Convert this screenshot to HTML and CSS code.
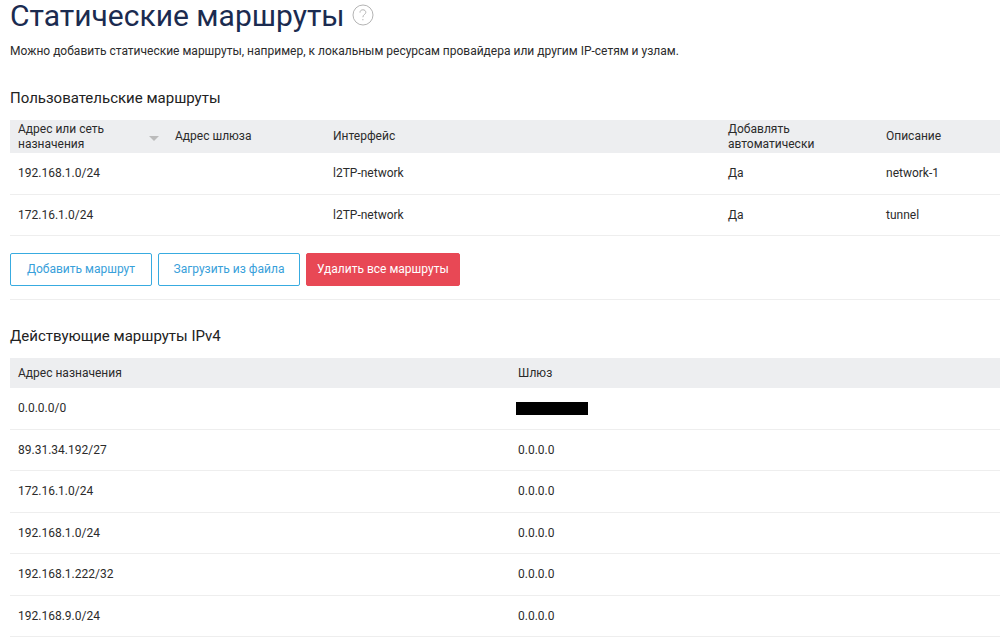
FILE: index.html
```html
<!DOCTYPE html>
<html lang="ru">
<head>
<meta charset="utf-8">
<meta name="viewport" content="width=device-width, initial-scale=1">
<title>Статические маршруты</title>
<link rel="stylesheet" href="styles.css">
</head>
<body>
<main class="page">
  <header class="page-header">
    <h1 class="page-title">Статические маршруты</h1>
    <button class="help" type="button" aria-label="Справка">
      <svg class="help-icon" viewBox="0 0 22 22" aria-hidden="true">
        <circle cx="11" cy="11" r="10"/>
        <path d="M8 8.6C8 6.7 9.2 5.8 10.9 5.8S13.8 6.8 13.8 8.4C13.8 10.4 10.9 10.6 10.9 13.2M10.9 15v1.3"/>
      </svg>
    </button>
  </header>
  <p class="lead">Можно добавить статические маршруты, например, к локальным ресурсам провайдера или другим IP-сетям и узлам.</p>

  <section class="user-routes">
    <h2 class="section-title">Пользовательские маршруты</h2>
    <table class="table">
      <colgroup><col class="col-address"><col class="col-field"><col><col class="col-field"><col class="col-note"></colgroup>
      <thead>
        <tr class="head-tall">
          <th scope="col" aria-sort="descending"><div class="sortable"><span>Адрес или сеть назначения</span><span class="sort-arrow"></span></div></th>
          <th scope="col">Адрес шлюза</th>
          <th scope="col">Интерфейс</th>
          <th scope="col">Добавлять автоматически</th>
          <th scope="col">Описание</th>
        </tr>
      </thead>
      <tbody>
        <tr><td>192.168.1.0/24</td><td></td><td>l2TP-network</td><td>Да</td><td>network-1</td></tr>
        <tr><td>172.16.1.0/24</td><td></td><td>l2TP-network</td><td>Да</td><td>tunnel</td></tr>
      </tbody>
    </table>
    <div class="actions">
      <button class="btn" type="button">Добавить маршрут</button>
      <button class="btn" type="button">Загрузить из файла</button>
      <button class="btn btn-danger" type="button">Удалить все маршруты</button>
    </div>
  </section>

  <section class="active-routes">
    <h2 class="section-title">Действующие маршруты IPv4</h2>
    <table class="table">
      <colgroup><col class="col-half"><col></colgroup>
      <thead>
        <tr class="head"><th scope="col">Адрес назначения</th><th scope="col">Шлюз</th></tr>
      </thead>
      <tbody>
        <tr><td>0.0.0.0/0</td><td><span class="redacted"></span></td></tr>
        <tr><td>89.31.34.192/27</td><td>0.0.0.0</td></tr>
        <tr><td>172.16.1.0/24</td><td>0.0.0.0</td></tr>
        <tr><td>192.168.1.0/24</td><td>0.0.0.0</td></tr>
        <tr><td>192.168.1.222/32</td><td>0.0.0.0</td></tr>
        <tr><td>192.168.9.0/24</td><td>0.0.0.0</td></tr>
      </tbody>
    </table>
  </section>
</main>
</body>
</html>
```

FILE: styles.css
```css
* { box-sizing: border-box; }

body {
  margin: 0;
  background: #fff;
  color: #2b2b2b;
  font-family: Roboto, "Liberation Sans", sans-serif;
  font-size: 12px;
  line-height: 15px;
}

.page { padding-left: 10px; }

.page-header {
  display: flex;
  align-items: center;
  gap: 7px;
  height: 32px;
}

.page-title {
  margin: 0;
  color: #1b2b50;
  font-size: 30px;
  font-weight: 400;
  line-height: 32px;
}

.help {
  width: 22px;
  height: 22px;
  margin: 0 0 2px;
  padding: 0;
  border: 0;
  background: none;
}

.help-icon {
  display: block;
  width: 22px;
  height: 22px;
  fill: none;
  stroke: #b4b4b4;
  stroke-width: 1;
}

.lead { margin: 12px 0 0; }

.user-routes {
  padding: 28px 0 13px;
  border-bottom: 1px solid #eee;
}

.active-routes { padding-top: 25px; }

.section-title {
  margin: 0 0 11px;
  color: #222;
  font-size: 15px;
  font-weight: 400;
  line-height: 22px;
}

.table {
  width: 100%;
  border-collapse: separate;
  border-spacing: 0;
  table-layout: fixed;
}

.col-address { width: 157px; }
.col-field { width: 158px; }
.col-note { width: 122px; }
.col-half { width: 500px; }

.table th {
  padding: 0 8px;
  background: #edeef0;
  font-weight: 400;
  text-align: left;
}

.head-tall { height: 33px; }
.head { height: 30px; }

.table td {
  height: 42px;
  padding: 0 8px;
  border-bottom: 1px solid #eee;
}

.table tr:nth-child(even) td { height: 41px; }

.sortable {
  display: flex;
  align-items: center;
  justify-content: space-between;
}

.sort-arrow {
  flex: none;
  margin-top: 3px;
  border: 5px solid transparent;
  border-top-color: #bbb;
  border-bottom: 0;
}

.redacted {
  display: block;
  width: 72px;
  height: 13px;
  margin-left: -2px;
  background: #000;
}

.actions {
  display: flex;
  gap: 6px;
  margin-top: 17px;
}

.btn {
  min-width: 142px;
  height: 33px;
  padding: 0 10px 1px;
  border: 1px solid #38abe0;
  border-radius: 2px;
  background: #fff;
  color: #38a0da;
  font: inherit;
  white-space: nowrap;
}

.btn-danger {
  border-color: #e84855;
  background: #e84855;
  color: #fff;
}
```
